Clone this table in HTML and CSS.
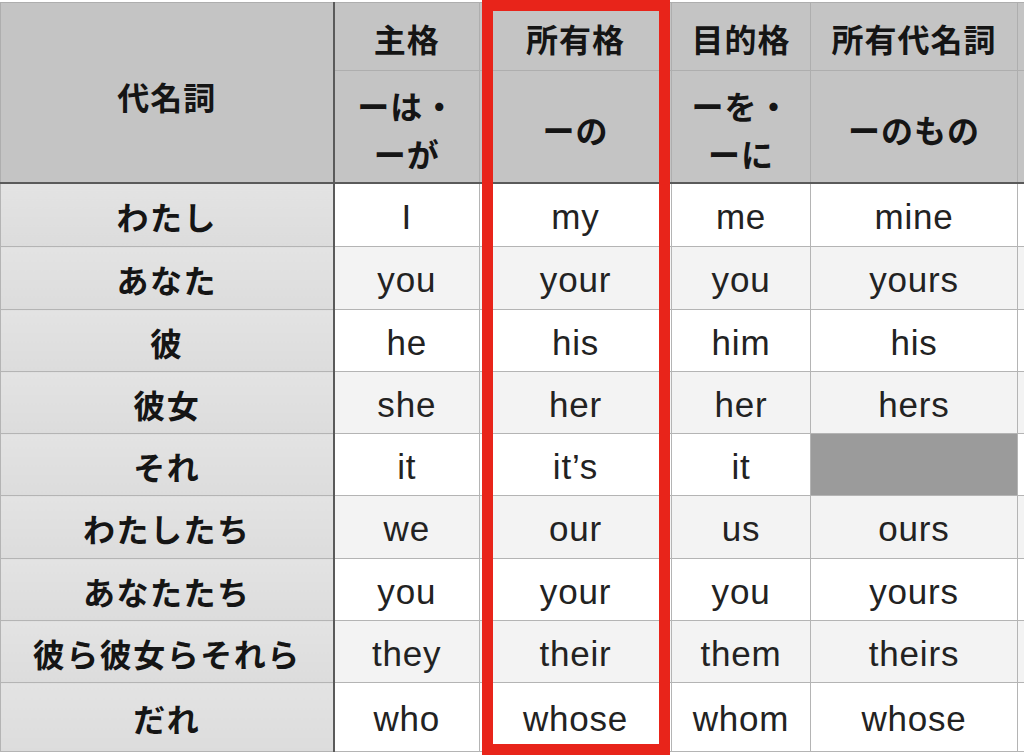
FILE: index.html
```html
<!DOCTYPE html>
<html lang="ja">
<head>
<meta charset="utf-8">
<link rel="stylesheet" href="styles.css">
</head>
<body>
<div class="sheet">
  <table class="pron">
    <colgroup>
      <col class="c1"><col class="c2"><col class="c3"><col class="c4"><col class="c5"><col class="c6">
    </colgroup>
    <thead>
      <tr class="h1">
        <th rowspan="2" class="corner">代名詞</th>
        <th>主格</th>
        <th>所有格</th>
        <th>目的格</th>
        <th>所有代名詞</th>
        <th class="edge"></th>
      </tr>
      <tr class="h2">
        <th>ーは・<br>ーが</th>
        <th>ーの</th>
        <th>ーを・<br>ーに</th>
        <th>ーのもの</th>
        <th class="edge"></th>
      </tr>
    </thead>
    <tbody>
      <tr class="r1"><th>わたし</th><td>I</td><td>my</td><td>me</td><td>mine</td><td class="edge"></td></tr>
      <tr class="r2 alt"><th>あなた</th><td>you</td><td>your</td><td>you</td><td>yours</td><td class="edge"></td></tr>
      <tr class="r3"><th>彼</th><td>he</td><td>his</td><td>him</td><td>his</td><td class="edge"></td></tr>
      <tr class="r4 alt"><th>彼女</th><td>she</td><td>her</td><td>her</td><td>hers</td><td class="edge"></td></tr>
      <tr class="r5"><th>それ</th><td>it</td><td>it’s</td><td>it</td><td class="blank"></td><td class="edge"></td></tr>
      <tr class="r6 alt"><th>わたしたち</th><td>we</td><td>our</td><td>us</td><td>ours</td><td class="edge"></td></tr>
      <tr class="r7"><th>あなたたち</th><td>you</td><td>your</td><td>you</td><td>yours</td><td class="edge"></td></tr>
      <tr class="r8 alt"><th>彼ら彼女らそれら</th><td>they</td><td>their</td><td>them</td><td>theirs</td><td class="edge"></td></tr>
      <tr class="r9"><th>だれ</th><td>who</td><td>whose</td><td>whom</td><td>whose</td><td class="edge"></td></tr>
    </tbody>
  </table>
  <div class="highlight"></div>
</div>
</body>
</html>
```

FILE: styles.css
```css
html, body {
  margin: 0;
  padding: 0;
  background: #ffffff;
  overflow: hidden;
}

.sheet {
  position: relative;
  width: 1024px;
  height: 755px;
  overflow: hidden;
  padding-top: 2px;
  box-sizing: border-box;
}

.pron {
  border-collapse: collapse;
  table-layout: fixed;
  width: 1040px;
  font-family: "Liberation Sans", Arial, sans-serif;
  color: #1c1c1c;
}

.c1 { width: 333px; }
.c2 { width: 146px; }
.c3 { width: 192px; }
.c4 { width: 139px; }
.c5 { width: 207px; }
.c6 { width: 23px; }

.pron th,
.pron td {
  border: 1px solid #b4b4b4;
  padding: 0;
  text-align: center;
  vertical-align: middle;
}

.pron thead th {
  background: #c4c4c4;
  font-family: "Noto Sans CJK JP", sans-serif;
  font-weight: 700;
  font-size: 32px;
  letter-spacing: 1px;
  line-height: 48px;
  color: #151515;
  border-color: #aeaeae;
}

.pron thead .h2 th {
  border-bottom: 2px solid #5a5a5a;
  padding-top: 5px;
}

.pron thead .corner {
  border-right: 2px solid #5a5a5a;
  border-bottom: 2px solid #5a5a5a;
  padding-top: 8px;
}

.h1 { height: 68px; }
.h1 th { padding-top: 2px; }
.h2 { height: 112px; }

.pron tbody th {
  background: linear-gradient(#e3e3e3, #dcdcdc);
  border-right: 2px solid #5a5a5a;
  font-family: "Noto Sans CJK JP", sans-serif;
  font-weight: 700;
  font-size: 32px;
  letter-spacing: 1.5px;
  color: #151515;
  padding-top: 2px;
}

.pron tbody td {
  background: #ffffff;
  font-size: 35px;
  font-weight: 400;
  letter-spacing: 0.8px;
  padding-top: 4px;
  color: #222222;
}

.pron tbody tr.alt td {
  background: #f3f3f3;
}

.pron tbody td.blank {
  background: #9b9b9b;
}

.r1 { height: 64px; }
.r2 { height: 63px; }
.r3 { height: 62px; }
.r4 { height: 62px; }
.r5 { height: 62px; }
.r6 { height: 63px; }
.r7 { height: 62px; }
.r8 { height: 62px; }
.r9 { height: 69px; }

.highlight {
  position: absolute;
  left: 482px;
  top: 0;
  width: 188px;
  height: 755px;
  border: 11px solid #e8241a;
  box-sizing: border-box;
  pointer-events: none;
}
```
